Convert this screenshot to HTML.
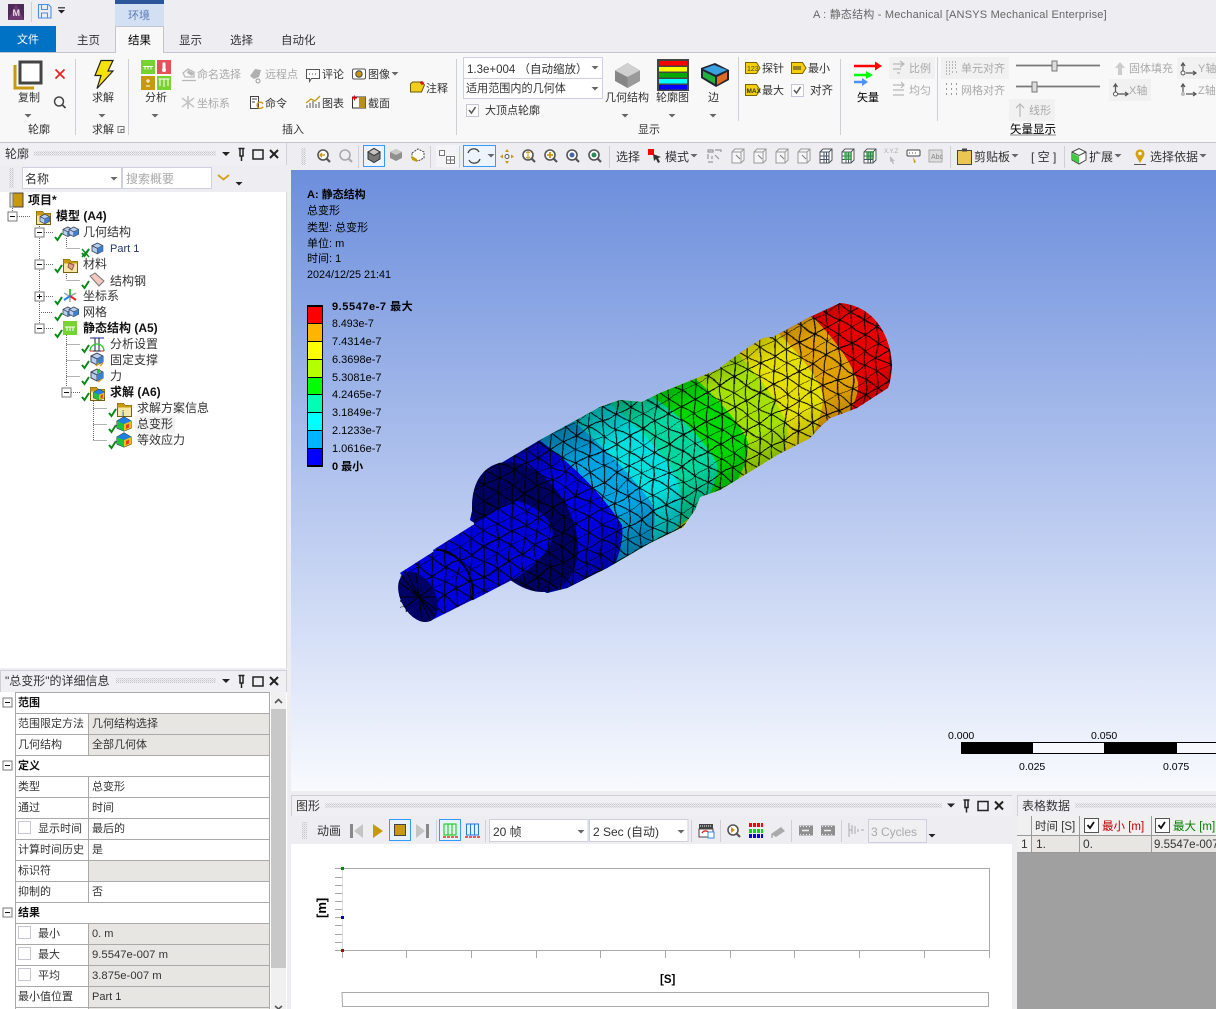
<!DOCTYPE html>
<html><head><meta charset="utf-8"><title>ANSYS Mechanical</title>
<style>
html,body{margin:0;padding:0;background:#eeeef2;overflow:hidden}
svg{display:block}
text{font:11px "Liberation Sans","Noto Sans CJK SC",sans-serif;fill:#333;white-space:pre}
.m{font-size:12px}
.g{fill:#a9a9a9}
.k{fill:#000}
.b{font-weight:700;fill:#111}
.v{font-size:11px;fill:#000}
.vb{font-size:11px;font-weight:700;fill:#000}
.sep{stroke:#cfcfd6;stroke-width:1;fill:none}
.dl{stroke:#666;stroke-width:1;stroke-dasharray:1 1;fill:none}
.ln{stroke:#a9a9a9;stroke-width:1;fill:none}
.ic{fill:none;stroke:#555;stroke-width:1.2}
.ig{fill:none;stroke:#b8b8b8;stroke-width:1.2}
</style></head><body>
<svg xmlns="http://www.w3.org/2000/svg" width="1216" height="1009" viewBox="0 0 1216 1009">
<defs>
<linearGradient id="bg" x1="0" y1="0" x2="0" y2="1"><stop offset="0" stop-color="#6c8edc"/><stop offset=".5" stop-color="#b2c4ee"/><stop offset="1" stop-color="#f8fafe"/></linearGradient>
<linearGradient id="sh" gradientUnits="userSpaceOnUse" x1="609" y1="396" x2="691" y2="544"><stop offset="0" stop-color="#000" stop-opacity=".35"/><stop offset=".28" stop-color="#000" stop-opacity="0"/><stop offset=".62" stop-color="#000" stop-opacity="0"/><stop offset="1" stop-color="#000" stop-opacity=".42"/></linearGradient>
<pattern id="dots" width="2" height="2" patternUnits="userSpaceOnUse"><rect width="1" height="1" fill="#c4c4cc"/><rect x="1" y="1" width="1" height="1" fill="#d8d8de"/></pattern>
<pattern id="mesh" width="15" height="26" patternUnits="userSpaceOnUse" patternTransform="translate(419 597) rotate(-29)"><path d="M0 0H15M0 13H15M0 0L7.500 13L0 26M15 0L7.500 13L15 26" fill="none" stroke="#000" stroke-width="1"/></pattern>
<filter id="wob" filterUnits="userSpaceOnUse" x="380" y="280" width="530" height="360"><feTurbulence type="fractalNoise" baseFrequency="0.03" numOctaves="2" seed="4" result="n"/><feDisplacementMap in="SourceGraphic" in2="n" scale="9" xChannelSelector="R" yChannelSelector="G"/></filter>
<clipPath id="sil"><path d="M480 477L503 462L540 440L600 407L620 400L642 402L660 393L717 370L740 353L763 338L773 337L810 317L840 303C867 305 888 325 892 362C892 375 890 382 888 388L857 408L830 418L820 427L810 438L777 455L720 490L700 497L695 510L683 527L650 543L607 568L567 588L547 593L530 585L500 540L470 520Z"/></clipPath>
<clipPath id="all">
<path d="M480 477L503 462L540 440L600 407L620 400L642 402L660 393L717 370L740 353L763 338L773 337L810 317L840 303C867 305 888 325 892 362C892 375 890 382 888 388L857 408L830 418L820 427L810 438L777 455L720 490L700 497L695 510L683 527L650 543L607 568L567 588L547 593L530 585L500 540L470 520Z"/>
<ellipse cx="525" cy="527" rx="46.7" ry="69.6" transform="rotate(-29 525 527)"/>
<path d="M433 550L513 500L552 538L512 580L473 600L440 570Z"/>
<path d="M400 573L436 550L465 560L478 585L472 600L432 620L400 610Z"/>
<ellipse cx="418" cy="597" rx="17" ry="27" transform="rotate(-29 418 597)"/>
</clipPath>
<clipPath id="endf"><ellipse cx="418" cy="597" rx="17" ry="27" transform="rotate(-29 418 597)"/></clipPath>
<g id="dd"><path d="M-3.5 0h7l-3.5 3.5z" fill="#666"/></g>
<g id="ddk"><path d="M-3.5 0h7l-3.5 3.5z" fill="#222"/></g>
<g id="hdr"><path d="M-4 -2h8l-4 4z" fill="#222"/><path d="M12.5 -5.500h6M14 -5v7h3v-7M15.500 2v5" stroke="#222" fill="none" stroke-width="1.500"/><rect x="27" y="-4" width="10" height="9" fill="none" stroke="#222" stroke-width="1.500"/><path d="M44 -4l8 8m0-8l-8 8" stroke="#222" stroke-width="2" fill="none"/></g>
<g id="chk"><path d="M0 4L2.500 7L7 0" fill="none" stroke="#0a8a16" stroke-width="2"/></g>
<g id="cb"><rect x=".5" y=".5" width="12" height="12" fill="#fff" stroke="#c6c6d6"/></g>
<g id="mn"><rect x="-4.500" y="-4.500" width="9" height="9" fill="#fff" stroke="#777"/><path d="M-2.500 0h5" stroke="#111"/></g>
<g id="cube"><path d="M0 3L6 0L12 3V9L6 12L0 9Z" fill="#b4cff0" stroke="#445"/><path d="M0 3L6 6L12 3M6 6V12" fill="none" stroke="#445"/><path d="M6 6L12 3V9L6 12Z" fill="#3d7fd0"/></g>
<g id="rain"><path d="M0 4L7 0L14 4V11L7 14L0 11Z" fill="#1a8a8a" stroke="#234"/><path d="M7 7L14 4V11L7 14Z" fill="#e8c020"/><path d="M0 4L7 7V14L0 11Z" fill="#20c040"/><path d="M0 4L7 0L14 4L7 7Z" fill="#2080e0"/><path d="M9 8l3-1.500v4l-3 1.500z" fill="#e04020"/></g>
<g id="fold"><path d="M.5 2.500h6l1.500 2h6.500v11H.5z" fill="#f6e8a4" stroke="#77600f"/><path d="M.5 2.500h6l1.500 2h6.500v2H.5z" fill="#c89a10"/></g>
<g id="mag"><circle r="5" fill="#fff" stroke="#555" stroke-width="1.600"/><path d="M3.500 3.500L7 7" stroke="#555" stroke-width="2.200"/></g>
<g id="magg"><circle r="5" fill="none" stroke="#aaa" stroke-width="1.600"/><path d="M3.500 3.500L7 7" stroke="#aaa" stroke-width="2.200"/></g>
<g id="bx"><path d="M-6 -4L-3 -7H6V4L3 7H-6Z" fill="#f6f6f8" stroke="#999"/><path d="M-6 -4H3V7M3 -4L6 -7" fill="none" stroke="#999"/><path d="M-2 -1l4 4" stroke="#888" stroke-width="1.200"/></g>
<g id="bxm"><path d="M-6 -4L-3 -7H6V4L3 7H-6Z" fill="#fff" stroke="#555"/><path d="M-6 -4H3V7M3 -4L6 -7M-6 0H3M-6 3.500H3M-2 -4V7M0.500 -4V7" fill="none" stroke="#456"/></g>
<g id="fil"><rect x="-7" y="-5" width="14" height="10" fill="#8f8f8f"/><path d="M-6 -4h1m2 0h1m2 0h1m2 0h1M-6 4h1m2 0h1m2 0h1m2 0h1" stroke="#eee"/><path d="M-4 0h7" stroke="#eee" stroke-width="1.500"/></g>
</defs>

<!-- page background -->
<rect width="1216" height="1009" fill="#eeeef2"/>

<!-- title bar -->
<rect x="8" y="4" width="16" height="16" fill="#4e2a56"/><path d="M8 20L16 4L24 20z" fill="#6e3a72"/><text x="12.500" y="16" style="font-size:9px;font-weight:700;fill:#e8dce8">M</text>
<path class="sep" d="M31.500 2v20"/>
<path d="M38.500 4.500h10l2.500 2.500v11h-12.500z M41.500 4.500v5h6v-5 M41.500 18v-5h6v5" fill="none" stroke="#4a90e0" stroke-width="1.100"/>
<rect x="58" y="7" width="7" height="1.500" fill="#555"/><use href="#ddk" x="61.500" y="10"/>
<rect x="115" y="0" width="49" height="26" fill="#d3dff3"/><rect x="115" y="0" width="49" height="4" fill="#2b579a"/>
<text x="128" y="19" style="fill:#5b7cb5">环境</text>
<text x="813" y="18" style="font-size:11px;fill:#666;letter-spacing:.2px">A : 静态结构 - Mechanical [ANSYS Mechanical Enterprise]</text>

<!-- tabs -->
<rect x="0" y="26" width="56" height="26" fill="#0072c6"/><text x="17" y="43" style="fill:#fff">文件</text>
<rect x="0" y="52" width="1216" height="91" fill="#f8f8f8"/>
<path d="M0 52.500H1216" stroke="#c4c4cc"/>
<path d="M0 142.500H1216" stroke="#c4c4cc"/>
<path d="M115.500 53V26.500H163.500V53" fill="#f8f8f8" stroke="#c4c4cc"/>
<text x="77" y="44" style="font-size:11.500px">主页</text><text x="128" y="44" class="k" style="font-size:11.500px">结果</text><text x="179" y="44" style="font-size:11.500px">显示</text><text x="230" y="44" style="font-size:11.500px">选择</text><text x="281" y="44" style="font-size:11.500px">自动化</text>

<!-- ribbon group 轮廓 -->
<path d="M15 65v23h19" fill="none" stroke="#c8990f" stroke-width="3"/>
<rect x="20" y="62" width="21" height="21" fill="#fff" stroke="#444" stroke-width="3"/>
<text x="18" y="101">复制</text><use href="#dd" x="28" y="114"/>
<path d="M55.500 69.500l9 9m0-9l-9 9" stroke="#e82020" stroke-width="1.700" fill="none"/>
<circle cx="59" cy="101.500" r="4.500" fill="none" stroke="#444" stroke-width="1.500"/><path d="M62.500 105l3 3" stroke="#444" stroke-width="1.800"/>
<text x="28" y="133">轮廓</text>
<path class="sep" d="M75.500 59v76M128.500 59v76M456.500 59v76M738.500 57v64M840.500 59v76M937.500 57v64"/>

<!-- 求解 -->
<path d="M101 60.500h12L108 71h5L97 88.500l4-13h-6z" fill="#f6e20a" stroke="#222" stroke-width="1.200"/>
<text x="92" y="101">求解</text><use href="#dd" x="102" y="114"/>
<text x="92" y="133">求解</text><path d="M118 126.500h6v6h-6z M121 129.500h3v3h-3z" fill="none" stroke="#777"/>

<!-- 分析 -->
<rect x="141" y="60" width="14" height="14" fill="#78d232"/><rect x="157" y="60" width="14" height="14" fill="#e6505a"/><rect x="141" y="76" width="14" height="14" fill="#c8990f"/><rect x="157" y="76" width="14" height="14" fill="#78d232"/>
<path d="M143 66.500h10M145 66.500v3M148 66.500v3M151 66.500v3" stroke="#fff" fill="none"/><path d="M164 62.500v7" stroke="#fff" stroke-width="3"/><circle cx="164" cy="70" r="2" fill="#fff"/>
<path d="M148 79v4M146 81h4M146 86h4" stroke="#fff" fill="none"/><path d="M160 79v7M164 79v8M168 79v7M158.500 79h11" stroke="#fff" fill="none"/>
<text x="145" y="101">分析</text><use href="#dd" x="155" y="114"/>

<!-- 插入 row 1 -->
<path class="ig" d="M182 80.500h14M183 73l5-4 6 3v5h-9z"/><path d="M188 70l6 3-2 3-5-3z" fill="#b8b8b8"/>
<text x="197" y="78" class="g">命名选择</text>
<path d="M250 76l5-7 6 1-2 7-5 2z" fill="#b0b0b0"/><circle cx="258" cy="81" r="2" fill="none" stroke="#999"/>
<text x="265" y="78" class="g">远程点</text>
<path d="M306.500 69.500h13v9h-8l-2 3v-3h-3z" fill="#fff" stroke="#555"/><path d="M309 74h1m2 0h1m2 0h1" stroke="#555"/>
<text x="322" y="78">评论</text>
<rect x="352.500" y="69" width="13" height="10" rx="1.500" fill="#fff" stroke="#555"/><circle cx="359" cy="74" r="3.200" fill="#c8990f" stroke="#444"/>
<text x="368" y="78">图像</text><use href="#dd" x="395" y="72"/>
<!-- 插入 row 2 -->
<path d="M188 96v13M182 98l12 9M194 98l-12 9" stroke="#c4c4c4" stroke-width="1.600" fill="none"/>
<text x="197" y="107" class="g">坐标系</text>
<path d="M250.500 96.500h8v12h-8z" fill="#fff" stroke="#444"/><path d="M252 99h5M252 102h3" stroke="#444"/><text x="256" y="109" style="font-size:11px;font-weight:700;fill:#c8990f">C</text>
<text x="265" y="107">命令</text>
<path d="M307 108v-3M310 108v-5M313 108v-7M316 108v-4M319 108v-6" stroke="#555"/><path d="M306 103l5-4 4 2 5-5" fill="none" stroke="#c8990f" stroke-width="1.300"/>
<text x="322" y="107">图表</text>
<rect x="352.500" y="97" width="13" height="11" fill="#fff" stroke="#333"/><rect x="359" y="97" width="6.500" height="11" fill="#b89018"/><path d="M352 98h5M354.500 95.500v5" stroke="#e00" stroke-width="1.300"/>
<text x="368" y="107">截面</text>
<path d="M410.500 84l2-2h9l3 3-3 7h-11z" fill="#f0cf20" stroke="#6a5a00"/><path d="M420 83h4M422 81v4" stroke="#e00" stroke-width="1.200"/>
<text x="426" y="92">注释</text>
<text x="282" y="133">插入</text>

<!-- 显示 -->
<rect x="463.500" y="57.500" width="139" height="21" fill="#fff" stroke="#cfcfe2"/>
<rect x="463.500" y="78.500" width="139" height="20" fill="#fff" stroke="#cfcfe2"/>
<text x="467" y="73" style="font-size:11.500px">1.3e+004 （自动缩放）</text><use href="#dd" x="595" y="66"/>
<text x="466" y="92" style="font-size:11.100px">适用范围内的几何体</text><use href="#dd" x="595" y="87"/>
<use href="#cb" x="466" y="104"/><path d="M469 110l2.500 3l4-6" fill="none" stroke="#555" stroke-width="1.500"/>
<text x="485" y="114">大顶点轮廓</text>
<path d="M615 70.500L627.500 63L640 70.500V81L627.500 88L615 81Z" fill="#868686"/><path d="M615 70.500L627.500 63L640 70.500L627.500 77Z" fill="#d0d0d0"/><path d="M627.500 77L640 70.500V81L627.500 88Z" fill="#9a9a9a"/>
<text x="605" y="101">几何结构</text><use href="#dd" x="625" y="114"/>
<rect x="657" y="59" width="32" height="32" fill="#444"/>
<rect x="659" y="61" width="28" height="4.500" fill="#f00"/><rect x="659" y="67" width="28" height="4.500" fill="#ff0"/><rect x="659" y="73" width="28" height="4.500" fill="#0a0"/><rect x="659" y="79" width="28" height="4.500" fill="#0ff"/><rect x="659" y="85" width="28" height="4.500" fill="#00f"/>
<text x="656" y="101">轮廓图</text><use href="#dd" x="672" y="114"/>
<path d="M701 68L715 63L729 70V80L716 87L701 78Z" fill="#223"/><path d="M703 69L714 65L727 70L716 75Z" fill="#3aa0e0"/><path d="M717 77L727 72V79L717 85Z" fill="#e06a20"/><path d="M703 71L715 77V84L703 77Z" fill="#20b040"/>
<text x="708" y="101">边</text><use href="#dd" x="713" y="114"/>
<text x="638" y="133">显示</text>

<!-- 探针 etc -->
<path d="M745.500 62.500h11l3.500 5.500-3.500 5.500h-11z" fill="#f4cf10" stroke="#7a6400"/><text x="747" y="71" style="font-size:7px;fill:#444">123</text>
<text x="762" y="72">探针</text>
<path d="M791.500 62.500h11l3.500 5.500-3.500 5.500h-11z" fill="#f4cf10" stroke="#7a6400"/><path d="M794 66v4M796 66v4M798 66v4M800 66v4" stroke="#333"/>
<text x="808" y="72">最小</text>
<path d="M745.500 84.500h11l3.500 5.500-3.500 5.500h-11z" fill="#f4cf10" stroke="#7a6400"/><text x="746.500" y="93" style="font-size:6.500px;font-weight:700;fill:#333">MAX</text>
<text x="762" y="94">最大</text>
<use href="#cb" x="791" y="84"/><path d="M794 90l2.500 3l4-6" fill="none" stroke="#555" stroke-width="1.500"/>
<text x="810" y="94" style="font-size:11.500px">对齐</text>

<!-- 矢量 -->
<path d="M854 66h22" stroke="#f00" stroke-width="2.500"/><path d="M875 61.500l7 4.500-7 4.500z" fill="#f00"/>
<path d="M854 75h13" stroke="#0f0" stroke-width="2.500"/><path d="M866 71l7 4-7 4z" fill="#0f0"/>
<path d="M854 82h9" stroke="#4a90ff" stroke-width="2.500"/><path d="M862 78l6 4-6 4z" fill="#4a90ff"/>
<text x="857" y="101" class="k">矢量</text>
<rect x="889" y="57" width="46" height="22" fill="#f1f1f1"/>
<path class="ig" d="M893 64h11M900 61l4 3-4 3M893 69h8M897 73h3"/>
<text x="909" y="72" class="g">比例</text>
<path class="ig" d="M893 85h11M893 90h11M893 95h11M901 82l3 3-3 3"/>
<text x="909" y="94" class="g">均匀</text>
<rect x="941" y="57" width="68" height="22" fill="#f1f1f1"/>
<path d="M946 62h1m2 0h1m2 0h1m2 0h1M946 65h1m2 0h1m2 0h1m2 0h1M946 68h1m2 0h1m2 0h1m2 0h1M946 71h1m2 0h1M952 72h1m3 0h1M946 74h1m2 0h1" stroke="#777"/>
<text x="961" y="72" class="g">单元对齐</text>
<path d="M946 84h1m4 0h1m4 0h1M946 89h1m4 0h1m4 0h1M946 94h1m4 0h1m4 0h1" stroke="#666" stroke-width="1.200"/>
<text x="961" y="94" class="g">网格对齐</text>
<path d="M1016 65.500h84" stroke="#777" stroke-width="1.800"/><rect x="1052" y="61" width="5" height="10" fill="#ddd" stroke="#777"/>
<path d="M1016 86.500h84" stroke="#777" stroke-width="1.800"/><rect x="1032" y="82" width="5" height="10" fill="#ddd" stroke="#777"/>
<path d="M1120 62l5 6h-3v7h-4v-7h-3z" fill="#ccc"/>
<text x="1129" y="72" class="g">固体填充</text>
<rect x="1177" y="57" width="39" height="22" fill="#f1f1f1"/><rect x="1109" y="79" width="42" height="22" fill="#f1f1f1"/>
<path d="M1183 64v9M1181 66l2-3 2 3M1186 73h9M1193 71l3 2-3 2" class="ic"/><circle cx="1183" cy="73" r="2" fill="#fff" stroke="#555"/>
<text x="1198" y="72" class="g">Y轴</text>
<path d="M1115.500 85v9M1113.500 87l2-3 2 3M1118 94h9M1125 92l3 2-3 2" class="ic"/><circle cx="1115.500" cy="94" r="2" fill="#fff" stroke="#555"/>
<text x="1129" y="94" class="g">X轴</text>
<path d="M1183 85v9M1181 87l2-3 2 3M1186 94h9M1193 92l3 2-3 2" class="ic"/><circle cx="1183" cy="94" r="2" fill="#bbb"/>
<text x="1198" y="94" class="g">Z轴</text>
<rect x="1009" y="99" width="46" height="22" fill="#f1f1f1"/>
<path d="M1020 117v-12M1016 108l4-4 4 4" class="ig"/>
<text x="1029" y="114" class="g">线形</text>
<text x="1010" y="133" class="k" style="font-size:11.500px">矢量显示</text><path d="M1010 135h46" stroke="#8a8a8a"/>

<!-- main toolbar -->
<rect x="0" y="143" width="287" height="22" fill="#f0f0f4"/>
<path d="M286.500 143v22" stroke="#cfcfda"/>
<text x="5" y="158" class="m">轮廓</text>
<rect x="34" y="151" width="182" height="5" fill="url(#dots)"/>
<use href="#hdr" x="226" y="154"/>
<rect x="301" y="148" width="5" height="17" fill="url(#dots)"/>
<use href="#mag" x="323" y="155"/><path d="M320 155h5M322 153l-2 2 2 2" stroke="#c8990f" fill="none" stroke-width="1.300"/>
<use href="#magg" x="345" y="155"/>
<path class="sep" d="M358.500 146v22M430.500 146v22M459.500 146v22M609.500 146v22M950.500 146v22M1064.500 146v22"/>
<rect x="363.500" y="145.500" width="21" height="21" fill="#eef4fb" stroke="#3399ff"/>
<path d="M368 152l6-3.500 6 3.500v7l-6 3.500-6-3.500z" fill="#777" stroke="#333"/><path d="M368 152l6 3.500 6-3.500-6-3.500z" fill="#c4c4c4" stroke="#333"/>
<path d="M390 152l6-3 6 3v6l-6 3-6-3z" fill="#8f8f8f"/><path d="M390 152l6 3 6-3-6-3z" fill="#c9c9c9"/>
<path d="M412 153l6-4 6 3v6l-6 3-6-3z" fill="#fff" stroke="#444" stroke-dasharray="2 1"/><path d="M412 156l5 3v3l-5-2z" fill="#c8990f"/>
<rect x="436" y="145" width="23" height="22" fill="#f4f4f6"/>
<rect x="439.500" y="150.500" width="5" height="5" fill="#fff" stroke="#777"/><path d="M446.500 156.500h8v7h-8zM450.500 156.500v7M446.500 160h8" fill="#fff" stroke="#777"/>
<rect x="463.500" y="145.500" width="32" height="21" fill="#eef4fb" stroke="#3399ff"/>
<path d="M468 153a6 6 0 0 1 11-1M480 159a6 6 0 0 1-11 1" fill="none" stroke="#444" stroke-width="1.300"/><use href="#dd" x="491" y="154"/>
<path d="M507 149l2 3h-4zM507 164l2-3h-4zM500 156.500l3-2v4zM514 156.500l-3-2v4z" fill="#c8990f"/><circle cx="507" cy="156.500" r="2" fill="#fff" stroke="#555"/>
<use href="#mag" x="528" y="155"/><path d="M528 152v6M526 153l2-1.500 2 1.500M526 157l2 1.500 2-1.500" stroke="#c8990f" fill="none"/>
<use href="#mag" x="550" y="155"/><path d="M547 155h6M550 152v6" stroke="#c8990f" stroke-width="1.800"/>
<use href="#mag" x="572" y="155"/><circle cx="572" cy="155" r="2.500" fill="#46a"/>
<use href="#mag" x="594" y="155"/><circle cx="594" cy="155" r="2.500" fill="#2a8a5a"/>
<text x="616" y="161" class="m">选择</text>
<rect x="648" y="149" width="6" height="6" fill="#f00"/><path d="M653 154l8 3-3 1 2 4-2 1-2-4-2 2z" fill="#333"/>
<text x="665" y="161" class="m">模式</text><use href="#dd" x="694" y="154"/>
<path d="M708 150h5v2h-5zM715 150h6v2M708 154v5M712 156v3M715 155l4 4M708 162h5" class="ig" style="stroke:#999"/>
<use href="#bx" x="738" y="156"/><use href="#bx" x="760" y="156"/><use href="#bx" x="782" y="156"/><use href="#bx" x="804" y="156"/>
<use href="#bxm" x="826" y="156"/><use href="#bxm" x="848" y="156"/><use href="#bxm" x="870" y="156"/>
<path d="M844 152h8v8h-8z" fill="#30b040" opacity=".6"/><path d="M866 151h8v8h-8z" fill="#20a030" opacity=".6"/>
<text x="884" y="153" style="font-size:6px;fill:#aaa">X.Y.Z</text><path d="M890 156l5 5-2 0 1 3-1 0-2-3-1 1z" fill="#bbb"/>
<rect x="907" y="150" width="13" height="6" rx="1" fill="#fff" stroke="#444"/><path d="M909 153h1m2 0h1m2 0h1" stroke="#444"/><path d="M913 157l3 5-2 1z" fill="#c8990f"/>
<rect x="929" y="150" width="13" height="12" fill="#ddd" stroke="#aaa"/><text x="931" y="159" style="font-size:7px;fill:#888">Abc</text>
<rect x="957.500" y="150.500" width="14" height="14" fill="#ecc652" stroke="#444"/><rect x="962" y="148.500" width="5" height="3" fill="#444"/>
<text x="974" y="161" class="m">剪贴板</text><use href="#dd" x="1015" y="154"/>
<text x="1031" y="161" class="m">[ 空 ]</text>
<path d="M1072 152l7-3.500 7 3.500v8l-7 4-7-4z" fill="#fff" stroke="#444"/><path d="M1072 152l7 3.500 7-3.500" fill="none" stroke="#444"/><path d="M1072 153l7 3.500v7l-7-4z" fill="#3ec93e"/>
<text x="1089" y="161" class="m">扩展</text><use href="#dd" x="1118" y="154"/>
<path d="M1140 163l-4-7a4.500 4.500 0 1 1 8 0z" fill="#d4a010"/><circle cx="1140" cy="153.500" r="1.700" fill="#fff"/><path d="M1134 164.500h12" stroke="#555"/>
<text x="1150" y="161" class="m">选择依据</text><use href="#dd" x="1203" y="154"/>

<!-- outline panel -->
<rect x="9" y="168" width="5" height="20" fill="url(#dots)"/>
<rect x="22.500" y="167.500" width="99" height="21" fill="#fff" stroke="#cfcfe2"/><text x="25" y="183" class="m">名称</text><use href="#dd" x="114" y="177"/>
<rect x="122.500" y="167.500" width="89" height="21" fill="#fff" stroke="#cfcfe2"/><text x="126" y="183" class="g m">搜索概要</text>
<path d="M218 175l5.500 4.500 5.500-4.500" fill="none" stroke="#d2a020" stroke-width="1.800"/><use href="#ddk" x="239" y="182"/>
<rect x="0" y="192" width="287" height="476" fill="#fff"/>
<path d="M286.500 192v476" stroke="#d8d8e0"/>

<!-- tree lines -->
<path class="dl" d="M12.500 208v3M17 216.500h13M39.500 222v101M44 232.500h9M44 264.500h9M44 296.500h9M39 312.500h14M44 328.500h9M66.500 238v10M66.500 248.500h14M66.500 270v10M66.500 280.500h14M66.500 335v52M66.500 344.500h14M66.500 360.500h14M66.500 376.500h14M71 392.500h10M93.500 399v41M93.500 408.500h14M93.500 424.500h14M93.500 440.500h14"/>
<use href="#mn" x="12.500" y="216.500"/><use href="#mn" x="39.500" y="232.500"/><use href="#mn" x="39.500" y="264.500"/><use href="#mn" x="39.500" y="296.500"/><path d="M39.500 294v5" stroke="#111"/><use href="#mn" x="39.500" y="328.500"/><use href="#mn" x="66.500" y="392.500"/>
<!-- tree icons -->
<rect x="10" y="193" width="13" height="14" fill="#c8990f" stroke="#444"/><rect x="10" y="193" width="3" height="14" fill="#ddd" stroke="#777"/>
<use href="#fold" x="36" y="209"/><use href="#cube" x="40" y="214" transform="translate(8 43) scale(.8)"/>
<use href="#cube" transform="translate(63 227) scale(.8)"/><use href="#cube" transform="translate(69 227) scale(.8)"/>
<use href="#cube" transform="translate(92 243) scale(.9)"/>
<use href="#chk" x="55" y="233"/><use href="#chk" x="82" y="249"/><path d="M82 249l7 8m0-8l-7 8" stroke="#0a8a16" stroke-width="1.500" fill="none"/>
<use href="#fold" x="63" y="257"/><path d="M69 263l5 2-2 5-4-3z" fill="#e8a090" stroke="#854"/>
<use href="#chk" x="55" y="265"/>
<path d="M90 276l5-3 9 8-5 5z" fill="#f2c8c0" stroke="#777"/><use href="#chk" x="82" y="281"/>
<path d="M70 290v12M64 293l12 7M76 293l-12 7" stroke="#9ab" stroke-width="1.500" fill="none"/><path d="M70 296v-7" stroke="#3c3" stroke-width="2"/><path d="M70 296l6 4" stroke="#e22" stroke-width="2"/><path d="M70 296l-6 4" stroke="#28e" stroke-width="2"/>
<use href="#chk" x="55" y="297"/>
<use href="#cube" transform="translate(63 307) scale(.8)"/><use href="#cube" transform="translate(69 307) scale(.8)"/><use href="#chk" x="55" y="313"/>
<rect x="63" y="321" width="14" height="14" fill="#78d232"/><path d="M65 327h10M67 327v4M70 327v4M73 327v4" stroke="#fff" fill="none"/><use href="#chk" x="55" y="330"/>
<path d="M90 338h14M95 338v13M99 338v13M90 351h14" stroke="#223" fill="none"/><path d="M90 351a7 7 0 0 1 14 0" fill="none" stroke="#2c2" stroke-width="1.300"/><path d="M90 338h3m2 0h3m2 0h3" stroke="#22c"/><path d="M90 351h3m8 0h3" stroke="#e22"/><use href="#chk" x="82" y="345"/>
<use href="#cube" x="91" y="353"/><path d="M96 366l3-3m1 3l3-3" stroke="#d4a020" stroke-width="1.400"/><use href="#chk" x="82" y="361"/>
<use href="#cube" x="91" y="369"/><path d="M97 370l3-1.500v4l-3 1.500z" fill="#2c2"/><path d="M98 382l4-3" stroke="#d4a020" stroke-width="1.400"/><use href="#chk" x="82" y="377"/>
<use href="#fold" x="90" y="385"/><use href="#rain" x="93" y="390" transform="translate(21 85) scale(.78)"/><use href="#chk" x="82" y="393"/>
<use href="#fold" x="117" y="401"/><text x="122" y="416" style="font-size:8px;font-weight:700;fill:#27c">i</text><use href="#chk" x="109" y="409"/>
<rect x="135" y="416" width="40" height="17" fill="#f2f2f2"/>
<use href="#rain" x="117" y="417"/><use href="#chk" x="109" y="425"/>
<use href="#rain" x="117" y="433"/><use href="#chk" x="109" y="441"/>
<!-- tree text -->
<text x="28" y="204" class="b m">项目*</text>
<text x="56" y="220" class="b m">模型 (A4)</text>
<text x="83" y="236" class="m">几何结构</text>
<text x="110" y="252" style="font-size:11px;fill:#243a66">Part 1</text>
<text x="83" y="268" class="m">材料</text>
<text x="110" y="285" class="m">结构钢</text>
<text x="83" y="300" class="m">坐标系</text>
<text x="83" y="316" class="m">网格</text>
<text x="83" y="332" class="b m">静态结构 (A5)</text>
<text x="110" y="348" class="m">分析设置</text>
<text x="110" y="364" class="m">固定支撑</text>
<text x="110" y="380" class="m">力</text>
<text x="110" y="396" class="b m">求解 (A6)</text>
<text x="137" y="412" class="m">求解方案信息</text>
<text x="137" y="428" class="m">总变形</text>
<text x="137" y="444" class="m">等效应力</text>

<!-- details panel -->
<rect x="0" y="670" width="287" height="22" fill="#f0f0f4"/><path d="M0.500 692V670.500H286.500V692" fill="none" stroke="#cfcfda"/>
<text x="5" y="685" class="m">"总变形"的详细信息</text>
<rect x="116" y="678" width="100" height="5" fill="url(#dots)"/>
<use href="#hdr" x="226" y="681"/>
<rect x="0" y="692" width="287" height="317" fill="#fff"/>
<rect x="88" y="713" width="181" height="42" fill="#e7e6e2"/>
<rect x="88" y="860" width="181" height="21" fill="#e7e6e2"/>
<rect x="88" y="923" width="181" height="86" fill="#e7e6e2"/>
<path class="ln" d="M15.500 692.500H269.500M15.500 713.500H269.500M15.500 734.500H269.500M15.500 755.500H269.500M15.500 776.500H269.500M15.500 797.500H269.500M15.500 818.500H269.500M15.500 839.500H269.500M15.500 860.500H269.500M15.500 881.500H269.500M15.500 902.500H269.500M15.500 923.500H269.500M15.500 944.500H269.500M15.500 965.500H269.500M15.500 986.500H269.500M15.500 1007.500H269.500M15.500 692V1009M269.500 692V1009M88.500 713V755M88.500 776V902M88.500 923V1009"/>
<use href="#mn" x="7.500" y="702.500"/><use href="#mn" x="7.500" y="765.500"/><use href="#mn" x="7.500" y="912.500"/>
<text x="18" y="706" class="b">范围</text>
<text x="18" y="727">范围限定方法</text><text x="92" y="727">几何结构选择</text>
<text x="18" y="748">几何结构</text><text x="92" y="748">全部几何体</text>
<text x="18" y="769" class="b">定义</text>
<text x="18" y="790">类型</text><text x="92" y="790">总变形</text>
<text x="18" y="811">通过</text><text x="92" y="811">时间</text>
<use href="#cb" x="18" y="821"/><text x="38" y="832">显示时间</text><text x="92" y="832">最后的</text>
<text x="18" y="853">计算时间历史</text><text x="92" y="853">是</text>
<text x="18" y="874">标识符</text>
<text x="18" y="895">抑制的</text><text x="92" y="895">否</text>
<text x="18" y="916" class="b">结果</text>
<use href="#cb" x="18" y="926"/><text x="38" y="937">最小</text><text x="92" y="937">0. m</text>
<use href="#cb" x="18" y="947"/><text x="38" y="958">最大</text><text x="92" y="958" style="font-size:11.300px">9.5547e-007 m</text>
<use href="#cb" x="18" y="968"/><text x="38" y="979">平均</text><text x="92" y="979" style="font-size:11.300px">3.875e-007 m</text>
<text x="18" y="1000">最小值位置</text><text x="92" y="1000">Part 1</text>
<rect x="271" y="692" width="15" height="317" fill="#f0f0f0"/>
<rect x="271" y="709" width="15" height="259" fill="#c8c8c8"/>
<path d="M275 703l3.500-3.500 3.500 3.500" fill="none" stroke="#555" stroke-width="1.600"/>
<path d="M275 1006l3.500 3 3.500-3" fill="none" stroke="#555" stroke-width="1.600"/>

<!-- viewport -->
<rect x="291" y="170" width="925" height="621" fill="url(#bg)"/>
<text x="307" y="198" class="vb">A: 静态结构</text>
<text x="307" y="214" class="v">总变形</text>
<text x="307" y="231" class="v">类型: 总变形</text>
<text x="307" y="247" class="v">单位: m</text>
<text x="307" y="262" class="v">时间: 1</text>
<text x="307" y="278" class="v" style="font-size:10.800px">2024/12/25 21:41</text>
<!-- legend -->
<rect x="307" y="305" width="16" height="162" fill="#000"/>
<rect x="308" y="307" width="14" height="16" fill="#f00"/><rect x="308" y="324" width="14" height="17" fill="#ffb400"/><rect x="308" y="342" width="14" height="17" fill="#ff0"/><rect x="308" y="360" width="14" height="17" fill="#b4ff00"/><rect x="308" y="378" width="14" height="16" fill="#0f0"/><rect x="308" y="395" width="14" height="17" fill="#00ffb4"/><rect x="308" y="413" width="14" height="17" fill="#0ff"/><rect x="308" y="431" width="14" height="17" fill="#00b4ff"/><rect x="308" y="449" width="14" height="16" fill="#00f"/>
<text x="332" y="310" class="vb" style="letter-spacing:.55px">9.5547e-7 最大</text>
<text x="332" y="327" class="v" style="font-size:10.600px">8.493e-7</text>
<text x="332" y="345" class="v">7.4314e-7</text>
<text x="332" y="363" class="v">6.3698e-7</text>
<text x="332" y="381" class="v">5.3081e-7</text>
<text x="332" y="398" class="v">4.2465e-7</text>
<text x="332" y="416" class="v">3.1849e-7</text>
<text x="332" y="434" class="v">2.1233e-7</text>
<text x="332" y="452" class="v">1.0616e-7</text>
<text x="332" y="470" class="vb">0 最小</text>

<!-- shaft model -->
<g clip-path="url(#sil)">
<rect x="400" y="280" width="520" height="340" fill="#e60000"/>
<path d="M300 100L795 300Q845 345 858 382Q860 400 838 430L300 800Z" fill="#e0a000"/>
<path d="M300 100L770 325Q812 365 822 392Q826 410 808 445L300 800Z" fill="#e6e000"/>
<path d="M300 100L730 345Q775 392 787 425Q790 445 775 470L300 800Z" fill="#a4e000"/>
<path d="M300 100L680 365Q735 412 748 442Q750 458 735 485L300 800Z" fill="#00d800"/>
<path d="M300 100L650 395Q695 425 717 463Q720 480 700 510L300 800Z" fill="#00d8a0"/>
<path d="M300 100L605 400Q650 435 672 470Q690 500 672 540L300 800Z" fill="#00e0e0"/>
<path d="M300 100L570 418Q625 465 653 505Q660 530 640 560L300 800Z" fill="#00a4e2"/>
<path d="M300 100L528 432Q590 475 622 525Q625 545 610 575L300 800Z" fill="#0000e4"/>
<rect x="400" y="280" width="520" height="340" fill="url(#sh)"/>
</g>
<ellipse cx="525" cy="527" rx="46.700" ry="69.600" transform="rotate(-29 525 527)" fill="#000060"/>
<path d="M433 550L470 540L500 586L473 600L450 600Z" fill="#0000dc"/>
<path d="M433 550L513 500C540 505 556 525 552 538C548 555 530 570 512 580L473 600C478 585 475 570 463 555C455 548 443 546 433 550Z" fill="#0000dc"/>
<path d="M400 573L436 550C455 548 478 575 472 600L432 620Z" fill="#0000e0"/>
<ellipse cx="418" cy="597" rx="17" ry="27" transform="rotate(-29 418 597)" fill="#000066"/>
<g clip-path="url(#all)"><rect x="380" y="280" width="530" height="360" fill="url(#mesh)" filter="url(#wob)"/></g>
<ellipse cx="418" cy="597" rx="17" ry="27" transform="rotate(-29 418 597)" fill="#000066"/>
<g clip-path="url(#endf)"><path d="M389 597H449M394 567L444 627M404 567L434 627M389 575L449 619M389 619L449 575M414 560L424 634" stroke="#000" stroke-width="1" fill="none"/></g>
<path d="M436 550C455 548 478 575 472 600" stroke="#000" stroke-width="1.800" fill="none"/>

<!-- scale bar -->
<text x="948" y="739" style="font-size:10.500px;fill:#000">0.000</text>
<text x="1091" y="739" style="font-size:10.500px;fill:#000">0.050</text>
<rect x="961" y="742" width="255" height="12" fill="#000"/>
<rect x="1033" y="743" width="71" height="10" fill="#f6f8fe"/><rect x="1177" y="743" width="39" height="10" fill="#f6f8fe"/>
<text x="1019" y="770" style="font-size:10.500px;fill:#000">0.025</text>
<text x="1163" y="770" style="font-size:10.500px;fill:#000">0.075</text>

<!-- graph panel -->
<rect x="291" y="791" width="925" height="218" fill="#eeeef2"/>
<rect x="292" y="795" width="720" height="21" fill="#f0f0f4"/><path d="M291.500 816V795.500H1012" fill="none" stroke="#cfcfda"/>
<text x="296" y="810" class="m">图形</text>
<rect x="325" y="803" width="617" height="5" fill="url(#dots)"/>
<use href="#hdr" x="951" y="805.500"/>
<rect x="291" y="816" width="649" height="28" fill="#eeeef2"/>
<rect x="302" y="822" width="5" height="17" fill="url(#dots)"/>
<text x="317" y="835" class="m">动画</text>
<path d="M350 824h3v14h-3z" fill="#888"/><path d="M363 824v14l-9-7z" fill="#c4c4c4"/>
<path d="M373 824l10 7-10 7z" fill="#c8990f"/>
<rect x="389.500" y="819.500" width="21" height="21" fill="#e9f1fa" stroke="#3399ff"/><rect x="394.500" y="824.500" width="11" height="11" fill="#c8990f" stroke="#444"/>
<path d="M416 824l9 7-9 7z" fill="#c4c4c4"/><path d="M426 824h3v14h-3z" fill="#888"/>
<path class="sep" d="M436.500 820v22M485.500 820v22M691.500 820v22M720.500 820v22M791.500 820v22M841.500 820v22"/>
<rect x="439.500" y="819.500" width="21" height="21" fill="#e9f1fa" stroke="#3399ff"/>
<path d="M444 824h12v11h-12zM448 824v11M452 824v11" fill="none" stroke="#0c0"/><path d="M443 837h3m1 0h3m1 0h3m1 0h3" stroke="#e00" stroke-width="1.200"/>
<path d="M466.500 824h12v11h-12zM470.500 824v11M474.500 824v11" fill="none" stroke="#27d"/><path d="M465 837h3m1 0h3m1 0h3m1 0h3" stroke="#e00" stroke-width="1.200"/>
<rect x="489.500" y="819.500" width="98.500" height="22" fill="#fff" stroke="#cfcfe2"/><text x="493" y="836" class="m">20 帧</text><use href="#dd" x="581" y="830"/>
<rect x="589.500" y="819.500" width="98.500" height="22" fill="#fff" stroke="#cfcfe2"/><text x="593" y="836" class="m">2 Sec (自动)</text><use href="#dd" x="681" y="830"/>
<rect x="699" y="824" width="14" height="5" fill="#444"/><path d="M700 826h1m1 0h1m1 0h1m1 0h1m1 0h1m1 0h1" stroke="#fff"/><rect x="699" y="829" width="14" height="8" fill="#fff" stroke="#444"/><path d="M702 833a4 4 0 0 1 7 0" stroke="#e22" fill="none" stroke-width="1.300"/><rect x="708" y="832" width="6" height="6" fill="#fff" stroke="#38e"/>
<use href="#mag" x="733" y="830"/><path d="M731 827l4 3-4 3z" fill="#c8990f"/>
<rect x="749" y="823" width="3" height="4" fill="#f00"/><rect x="753" y="823" width="3" height="4" fill="#f00"/><rect x="757" y="823" width="3" height="4" fill="#f00"/><rect x="761" y="823" width="2" height="4" fill="#f00"/>
<rect x="749" y="829" width="3" height="4" fill="#0d0"/><rect x="753" y="829" width="3" height="4" fill="#0d0"/><rect x="757" y="829" width="3" height="4" fill="#0d0"/><rect x="761" y="829" width="2" height="4" fill="#0d0"/>
<rect x="749" y="834" width="3" height="4" fill="#00e"/><rect x="753" y="834" width="3" height="4" fill="#00e"/><rect x="757" y="834" width="3" height="4" fill="#00e"/><rect x="761" y="834" width="2" height="4" fill="#00e"/>
<path d="M771 834l10-7 4 4-9 6z" fill="#aaa"/><path d="M772 834v4" stroke="#aaa" stroke-width="1.500"/>
<use href="#fil" x="806" y="830.500"/><use href="#fil" x="828" y="830.500"/>
<path d="M849 823v14M849 830h3M852 825v9M855 826v8M858 829v3M861 830h3" stroke="#aaa" fill="none"/>
<rect x="868.500" y="819.500" width="58" height="23" fill="#f0f0f3" stroke="#cfcfe0"/><text x="871" y="836" class="g m">3 Cycles</text>
<use href="#ddk" x="932" y="834"/>
<rect x="291" y="844" width="721" height="165" fill="#fff"/>
<path class="ln" d="M342 868.500H989.500V958M342 950.500H989.500M342 992.500H988.500V1006.500H342.500Z"/>
<path d="M342.500 868v82" stroke="#dcdcdc"/>
<path class="ln" d="M335 868.500h7M335 877.500h7M335 885.500h7M335 893.500h7M335 901.500h7M335 909.500h7M335 917.500h7M335 925.500h7M335 934.500h7M335 942.500h7M335 950.500h7M342.500 950v8M406.500 950v8M471.500 950v8M536.500 950v8M600.500 950v8M665.500 950v8M730.500 950v8M794.500 950v8M859.500 950v8M924.500 950v8"/>
<rect x="341" y="867" width="3" height="3" fill="#080"/><rect x="341" y="916" width="3" height="3" fill="#00c"/><rect x="341" y="949" width="3" height="3" fill="#b00"/>
<text transform="translate(326 918) rotate(-90)" class="b" style="font-size:13px;fill:#000">[m]</text>
<text x="660" y="983" class="b" style="font-size:11.500px;fill:#000">[S]</text>

<!-- table panel -->
<rect x="1012" y="791" width="5" height="218" fill="#eeeef2"/>
<rect x="1018" y="795" width="198" height="21" fill="#f0f0f4"/><path d="M1017.500 816V795.500H1216" fill="none" stroke="#cfcfda"/>
<text x="1022" y="810" class="m">表格数据</text>
<rect x="1075" y="803" width="141" height="5" fill="url(#dots)"/>
<rect x="1017" y="816" width="199" height="193" fill="#a0a0a0"/>
<rect x="1017" y="816" width="199" height="19" fill="#f0f0f0"/>
<rect x="1032" y="835" width="184" height="17" fill="#e7e6e2"/><rect x="1017" y="835" width="15" height="17" fill="#f0f0f0"/>
<path d="M1017 835.500H1216M1017 852.500H1216" stroke="#999"/>
<path d="M1031.500 816V852M1079.500 816V852M1151.500 816V852" stroke="#999"/>
<text x="1035" y="830" style="font-size:11.500px">时间 [S]</text>
<rect x="1084.500" y="818.500" width="14" height="14" fill="#fff" stroke="#555"/><path d="M1087.500 825l2.500 3 4-6" fill="none" stroke="#111" stroke-width="1.800"/>
<text x="1102" y="830" style="font-size:11.500px;fill:#c00000">最小 [m]</text>
<rect x="1155.500" y="818.500" width="14" height="14" fill="#fff" stroke="#555"/><path d="M1158.500 825l2.500 3 4-6" fill="none" stroke="#111" stroke-width="1.800"/>
<text x="1173" y="830" style="font-size:11.500px;fill:#008000">最大 [m]</text>
<text x="1021" y="848" class="m">1</text><text x="1036" y="848" class="m">1.</text><text x="1083" y="848" class="m">0.</text><text x="1154" y="848" style="font-size:11.500px">9.5547e-007</text>
</svg>
</body></html>
